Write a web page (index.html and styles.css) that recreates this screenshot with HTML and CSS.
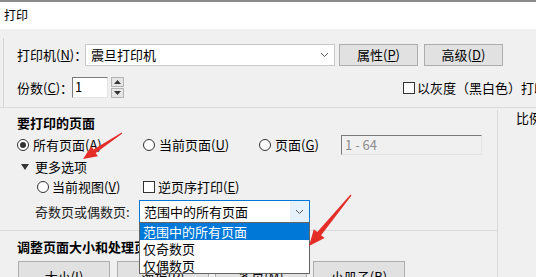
FILE: index.html
```html
<!DOCTYPE html>
<html lang="zh">
<head>
<meta charset="utf-8">
<title>打印</title>
<link rel="stylesheet" href="styles.css">
</head>
<body>
<div class="win">
  <div class="title">打印</div>
  <div class="body">
    <div class="frame">
      <div class="row printer-row">
        <span class="lbl w68">打印机(<u>N</u>)：</span>
        <div class="combo"><span>震旦打印机</span><span class="chev"><svg width="9" height="6" viewBox="0 0 9 6"><path d="M1 1l3.5 3.5L8 1" fill="none" stroke="#555" stroke-width="1"/></svg></span></div>
        <button class="btn w79">属性(<u>P</u>)</button>
        <button class="btn w79 ml6">高级(<u>D</u>)</button>
      </div>
      <div class="row copies-row">
        <span class="lbl w55">份数(<u>C</u>)：</span>
        <div class="sunken num">1</div>
        <div class="spin"><span class="sb"><svg width="7" height="4" viewBox="0 0 7 4"><path d="M0 4L3.5 0L7 4z" fill="#333"/></svg></span><span class="sb"><svg width="7" height="4" viewBox="0 0 7 4"><path d="M0 0L3.5 4L7 0z" fill="#333"/></svg></span></div>
        <label class="chk gray-chk"><span class="box"></span><span>以灰度（黑白色）打印</span></label>
      </div>
    </div>
    <div class="split">
      <div class="left">
        <section class="pages">
          <h3>要打印的页面</h3>
          <div class="radio-grid">
            <label class="opt"><span class="radio on"></span><span>所有页面(<u>A</u>)</span></label>
            <label class="opt"><span class="radio"></span><span>当前页面(<u>U</u>)</span></label>
            <label class="opt"><span class="radio"></span><span>页面(<u>G</u>)</span></label>
            <div class="sunken range">1 - 64</div>
          </div>
          <div class="more"><span class="tri"></span><span>更多选项</span></div>
          <div class="view-grid">
            <label class="opt"><span class="radio"></span><span>当前视图(<u>V</u>)</span></label>
            <label class="opt"><span class="box"></span><span>逆页序打印(<u>E</u>)</span></label>
          </div>
          <div class="odd-row">
            <span class="odd-lbl">奇数页或偶数页:</span>
            <div class="select"><span>范围中的所有页面</span><span class="chev sel-chev"><svg width="9" height="6" viewBox="0 0 9 6"><path d="M1 1l3.5 3.5L8 1" fill="none" stroke="#555" stroke-width="1"/></svg></span></div>
          </div>
        </section>
        <section class="resize">
          <h3>调整页面大小和处理页面</h3>
          <div class="btn-row">
            <button class="btn big">大小(<u>I</u>)</button>
            <button class="btn big">海报(<u>P</u>)</button>
            <button class="btn big">多页(<u>M</u>)</button>
            <button class="btn big">小册子(<u>B</u>)</button>
          </div>
        </section>
      </div>
      <div class="right">比例</div>
    </div>
  </div>

  <ul class="dropdown">
    <li class="hl">范围中的所有页面</li>
    <li>仅奇数页</li>
    <li>仅偶数页</li>
  </ul>

  <svg class="arrows" width="536" height="277" viewBox="0 0 536 277">
    <polygon fill="#e52d27" points="122.3,133.4 95.7,152.9 97.9,156.2 83,159 91.3,146.2 93.5,149.5 121.7,132.6"/>
    <polygon fill="#e52d27" points="351.5,195.4 321.1,235.2 324.6,238 309,246 313.8,229.2 317.3,232 350.5,194.6"/>
  </svg>
</div>
</body>
</html>
```

FILE: styles.css
```css
* { box-sizing: border-box; }
html, body { margin: 0; padding: 0; }
body {
  width: 536px;
  height: 277px;
  overflow: hidden;
  background: #f0f0f0;
  font-family: "Noto Sans CJK SC", "Noto Sans", sans-serif;
  font-size: 13px;
  color: #000;
}
u { text-underline-offset: 1px; }
.win { position: relative; width: 536px; height: 277px; overflow: hidden; }

.title {
  height: 29px;
  background: #fff;
  border-top: 2px solid #8a8a8a;
  padding-left: 4px;
  font-size: 12px;
  line-height: 26px;
}

.body { display: flex; flex-direction: column; }
.frame {
  margin-left: 3px;
  margin-top: 9px;
  padding-top: 6px;
  border-left: 1px solid #d4d4d4;
}
.row { display: flex; align-items: center; padding-left: 13px; }
.printer-row { height: 22px; }
.copies-row { height: 21px; margin-top: 11px; margin-bottom: 9px; }
.lbl { white-space: nowrap; line-height: 18px; }
.w68 { width: 68px; }
.w55 { width: 55px; }
.w79 { width: 79px; }
.ml6 { margin-left: 6px; }

.combo {
  width: 250px;
  height: 22px;
  margin-right: 4px;
  background: #fff;
  border: 1px solid #c9c9c9;
  display: flex;
  align-items: center;
  padding-left: 5px;
  line-height: 18px;
}
.combo span:first-child { flex: 1; }
.chev { width: 19px; height: 20px; display: flex; align-items: center; justify-content: center; }

.btn {
  height: 22px;
  background: #e1e1e1;
  border: 1px solid #adadad;
  font-family: inherit;
  font-size: 13px;
  color: #000;
  padding: 0;
  line-height: 18px;
}

.sunken {
  background: #fff;
  border-top: 1px solid #7a7a7a;
  border-left: 1px solid #7a7a7a;
  border-right: 1px solid #e3e3e3;
  border-bottom: 1px solid #e3e3e3;
  line-height: 18px;
  padding-left: 2px;
}
.num { width: 36px; height: 21px; }
.spin {
  margin-left: 3px;
  width: 13px;
  height: 21px;
  display: flex;
  flex-direction: column;
  gap: 1px;
}
.sb {
  flex: 1;
  background: #e6e6e6;
  border: 1px solid #b5b5b5;
  display: flex;
  align-items: center;
  justify-content: center;
}

.chk { display: flex; align-items: center; gap: 2px; white-space: nowrap; line-height: 18px; }
.gray-chk { margin-left: auto; width: 133px; flex-shrink: 0; }
.box {
  width: 12px;
  height: 12px;
  background: #fff;
  border: 1px solid #333;
  flex-shrink: 0;
}

.split {
  display: flex;
  border-top: 1px solid #dadada;
  flex: 1;
}
.left { width: 497px; flex-shrink: 0; }
.right {
  flex: 1;
  margin-top: 2px;
  border-left: 1px solid #d9d9d9;
  padding-left: 18px;
  line-height: 16px;
  white-space: nowrap;
}

h3 { margin: 0; font-size: 13px; font-weight: 700; line-height: 18px; }

.pages {
  padding: 6px 0 7px 17px;
  border-bottom: 1px solid #dadada;
}
.opt { display: flex; align-items: center; gap: 4px; white-space: nowrap; line-height: 18px; }
.radio {
  width: 12px;
  height: 12px;
  border-radius: 50%;
  border: 1px solid #333;
  background: #fff;
  flex-shrink: 0;
  position: relative;
}
.radio.on::after {
  content: "";
  position: absolute;
  left: 2px; top: 2px;
  width: 6px; height: 6px;
  border-radius: 50%;
  background: #333;
}
.radio-grid {
  display: grid;
  grid-template-columns: 126px 116px 82px 141px;
  align-items: center;
  height: 20px;
  margin-top: 3px;
}
.range { height: 20px; background: #f0f0f0; color: #8c8c8c; padding-left: 3px; }

.more { display: flex; align-items: center; gap: 6px; margin-top: 3px; line-height: 18px; padding-left: 4px; }
.tri {
  width: 0; height: 0;
  border-left: 4px solid transparent;
  border-right: 4px solid transparent;
  border-top: 6px solid #333;
}
.view-grid {
  display: grid;
  grid-template-columns: 106px auto;
  padding-left: 20px;
  margin-top: 2px;
  align-items: center;
}
.view-grid .opt { gap: 3px; }

.odd-row { display: flex; align-items: center; margin-top: 4px; padding-left: 18px; }
.odd-lbl { width: 100px; text-align: right; padding-right: 6px; line-height: 18px; white-space: nowrap; color: #222; }
.select {
  margin-left: 4px;
  width: 171px;
  height: 23px;
  border: 1px solid #0078d7;
  background: #fff;
  display: flex;
  align-items: center;
  padding-left: 4px;
  line-height: 18px;
}
.select span:first-child { flex: 1; }
.sel-chev { background: #e5f1fb; height: 21px; }

.resize { padding: 7px 0 0 17px; }
.btn-row { display: flex; gap: 6px; margin-top: 5px; padding-left: 1px; }
.btn.big { width: 92px; height: 30px; line-height: 24px; padding-top: 2px; }
.btn-row .btn.big:nth-child(2) { margin-left: 1px; }

.dropdown {
  position: absolute;
  left: 139px;
  top: 222px;
  width: 171px;
  height: 52px;
  margin: 0;
  padding: 0;
  list-style: none;
  background: #fff;
  border: 1px solid #646464;
}
.dropdown li { height: 17px; line-height: 17px; padding-left: 3px; white-space: nowrap; }
.dropdown li.hl { background: #0078d7; color: #fff; }

.arrows { position: absolute; left: 0; top: 0; pointer-events: none; }
```
